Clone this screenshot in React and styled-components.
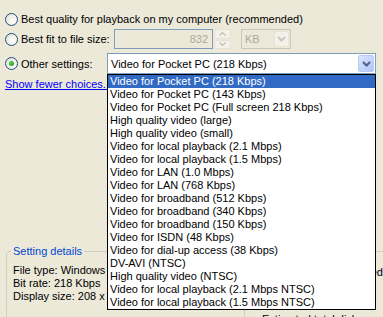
import React from 'react';
import styled, { createGlobalStyle } from 'styled-components';

const presets = [
  'Video for Pocket PC (218 Kbps)',
  'Video for Pocket PC (143 Kbps)',
  'Video for Pocket PC (Full screen 218 Kbps)',
  'High quality video (large)',
  'High quality video (small)',
  'Video for local playback (2.1 Mbps)',
  'Video for local playback (1.5 Mbps)',
  'Video for LAN (1.0 Mbps)',
  'Video for LAN (768 Kbps)',
  'Video for broadband (512 Kbps)',
  'Video for broadband (340 Kbps)',
  'Video for broadband (150 Kbps)',
  'Video for ISDN (48 Kbps)',
  'Video for dial-up access (38 Kbps)',
  'DV-AVI (NTSC)',
  'High quality video (NTSC)',
  'Video for local playback (2.1 Mbps NTSC)',
  'Video for local playback (1.5 Mbps NTSC)',
];

const Chevron = ({ color }) => (
  <svg width="9" height="6" viewBox="0 0 9 6">
    <path d="M1 1 L4.5 4.5 L8 1" fill="none" stroke={color} strokeWidth="2" />
  </svg>
);

const Arrow = ({ up }) => (
  <svg width="7" height="4" viewBox="0 0 7 4">
    <path d={up ? 'M0.5 3.5 L3.5 0.5 L6.5 3.5' : 'M0.5 0.5 L3.5 3.5 L6.5 0.5'} fill="none" stroke="#c9c7ba" strokeWidth="1.5" />
  </svg>
);

const App = () => {
  return (
    <Page>
      <GlobalStyle />
      <Row h={20}>
        <Radio />
        <Label>Best quality for playback on my computer (recommended)</Label>
      </Row>
      <Row h={20}>
        <Radio />
        <Label w={93}>Best fit to file size:</Label>
        <SizeInput>832</SizeInput>
        <Spinner>
          <SpinButton><Arrow up /></SpinButton>
          <SpinButton><Arrow /></SpinButton>
        </Spinner>
        <SmallCombo>
          <span>KB</span>
          <SmallComboButton><Chevron color="#c9c7ba" /></SmallComboButton>
        </SmallCombo>
      </Row>
      <Row h={21} top={4}>
        <Radio checked />
        <Label w={86}>Other settings:</Label>
        <ComboWrap>
          <Combo>
            <span>Video for Pocket PC (218 Kbps)</span>
            <ComboButton><Chevron color="#4d6185" /></ComboButton>
          </Combo>
          <DropList>
            {presets.map((p, i) => (
              <Option key={p} selected={i === 0}>{p}</Option>
            ))}
          </DropList>
        </ComboWrap>
      </Row>
      <Row h={20}>
        <LinkText>Show fewer choices...</LinkText>
      </Row>
      <Group>
        <Legend>Setting details</Legend>
        <Columns>
          <div>
            <Line>File type: Windows Media Video (wmv)</Line>
            <Line>Bit rate: 218 Kbps</Line>
            <Line>Display size: 208 x 160 pixels</Line>
          </div>
          <RightCol>
            <Line>Audio: Not used</Line>
          </RightCol>
        </Columns>
        <Footer>
          <FooterBox>Estimated total disk space</FooterBox>
        </Footer>
      </Group>
    </Page>
  );
};

export default App;

const GlobalStyle = createGlobalStyle`
  html, body {
    margin: 0;
    padding: 0;
  }
  body {
    background: #ece9d8;
    font-family: "Liberation Sans", Arial, sans-serif;
    font-size: 11px;
    color: #000;
    overflow: hidden;
  }
`;

const Page = styled.div`
  width: 383px;
  height: 317px;
  overflow: hidden;
  padding-top: 9px;
  box-sizing: border-box;
`;

const Row = styled.div`
  display: flex;
  align-items: center;
  height: ${p => p.h}px;
  margin-top: ${p => p.top || 0}px;
  padding-left: 5px;
  position: relative;
  z-index: ${p => (p.top ? 2 : 1)};
`;

const Radio = styled.span`
  width: 13px;
  height: 13px;
  box-sizing: border-box;
  border-radius: 50%;
  border: 1px solid #1c5180;
  background: radial-gradient(circle at 65% 65%, #ffffff 0%, #f4f3ee 40%, #dcd9cb 100%);
  margin-right: 3px;
  flex: none;
  display: flex;
  align-items: center;
  justify-content: center;

  &::after {
    content: '';
    display: ${p => (p.checked ? 'block' : 'none')};
    width: 5px;
    height: 5px;
    border-radius: 50%;
    background: radial-gradient(circle at 40% 40%, #55d651 0%, #21a121 70%, #1a8a1a 100%);
  }
`;

const Label = styled.span`
  width: ${p => (p.w ? `${p.w}px` : 'auto')};
  flex: none;
  white-space: nowrap;
`;

const SizeInput = styled.div`
  width: 99px;
  height: 20px;
  box-sizing: border-box;
  border: 1px solid #7f9db9;
  background: #ece9d8;
  color: #aca899;
  text-align: right;
  padding-right: 4px;
  line-height: 18px;
`;

const Spinner = styled.div`
  width: 17px;
  height: 20px;
  margin-left: 1px;
  display: flex;
  flex-direction: column;
  gap: 1px;
  box-sizing: border-box;
`;

const SpinButton = styled.div`
  flex: 1;
  border: 1px solid #e6e3d6;
  border-radius: 2px;
  background: #f3f1ea;
  display: flex;
  align-items: center;
  justify-content: center;
`;

const SmallCombo = styled.div`
  margin-left: 10px;
  width: 50px;
  height: 20px;
  box-sizing: border-box;
  border: 1px solid #c9c7ba;
  background: #ece9d8;
  color: #aca899;
  display: flex;
  align-items: center;
  justify-content: space-between;
  padding: 1px 1px 1px 3px;
`;

const SmallComboButton = styled.div`
  width: 15px;
  height: 16px;
  border: 1px solid #e6e3d6;
  border-radius: 2px;
  background: #f3f1ea;
  box-sizing: border-box;
  display: flex;
  align-items: center;
  justify-content: center;
`;

const ComboWrap = styled.div`
  position: relative;
  width: 269px;
`;

const Combo = styled.div`
  height: 21px;
  box-sizing: border-box;
  border: 1px solid #7f9db9;
  background: #fff;
  display: flex;
  align-items: center;
  justify-content: space-between;
  padding: 1px 1px 1px 3px;
`;

const ComboButton = styled.div`
  width: 16px;
  height: 17px;
  box-sizing: border-box;
  border: 1px solid #b9cbf3;
  border-radius: 2px;
  background: linear-gradient(135deg, #dce6fd 0%, #c1d3fb 60%, #b1c6f8 100%);
  display: flex;
  align-items: center;
  justify-content: center;
`;

const DropList = styled.div`
  position: absolute;
  top: 21px;
  left: 0;
  width: 269px;
  box-sizing: border-box;
  border: 1px solid #000;
  background: #fff;
`;

const Option = styled.div`
  height: 13px;
  line-height: 13px;
  padding-left: 2px;
  white-space: nowrap;
  background: ${p => (p.selected ? '#316ac5' : 'transparent')};
  color: ${p => (p.selected ? '#fff' : '#000')};
`;

const LinkText = styled.span`
  color: #0000ff;
  text-decoration: underline;
  white-space: nowrap;
`;

const Group = styled.fieldset`
  margin: 151px 0 0 6px;
  padding: 0 0 0 4px;
  width: 400px;
  border: 1px solid #d0d0bf;
  border-radius: 3px;
  min-inline-size: 0;
`;

const Legend = styled.legend`
  padding: 0 2px;
  color: #0046d5;
  line-height: 13px;
`;

const Columns = styled.div`
  display: grid;
  grid-template-columns: 1fr auto;
  padding: 6px 28px 0 2px;
`;

const RightCol = styled.div`
  text-align: right;
  padding-top: 2px;
`;

const Line = styled.div`
  line-height: 13px;
  white-space: nowrap;
`;

const Footer = styled.div`
  padding: 1px 0 0 233px;
`;

const FooterBox = styled.div`
  border-left: 1px solid #d0d0bf;
  padding: 9px 0 0 17px;
  height: 20px;
`;
